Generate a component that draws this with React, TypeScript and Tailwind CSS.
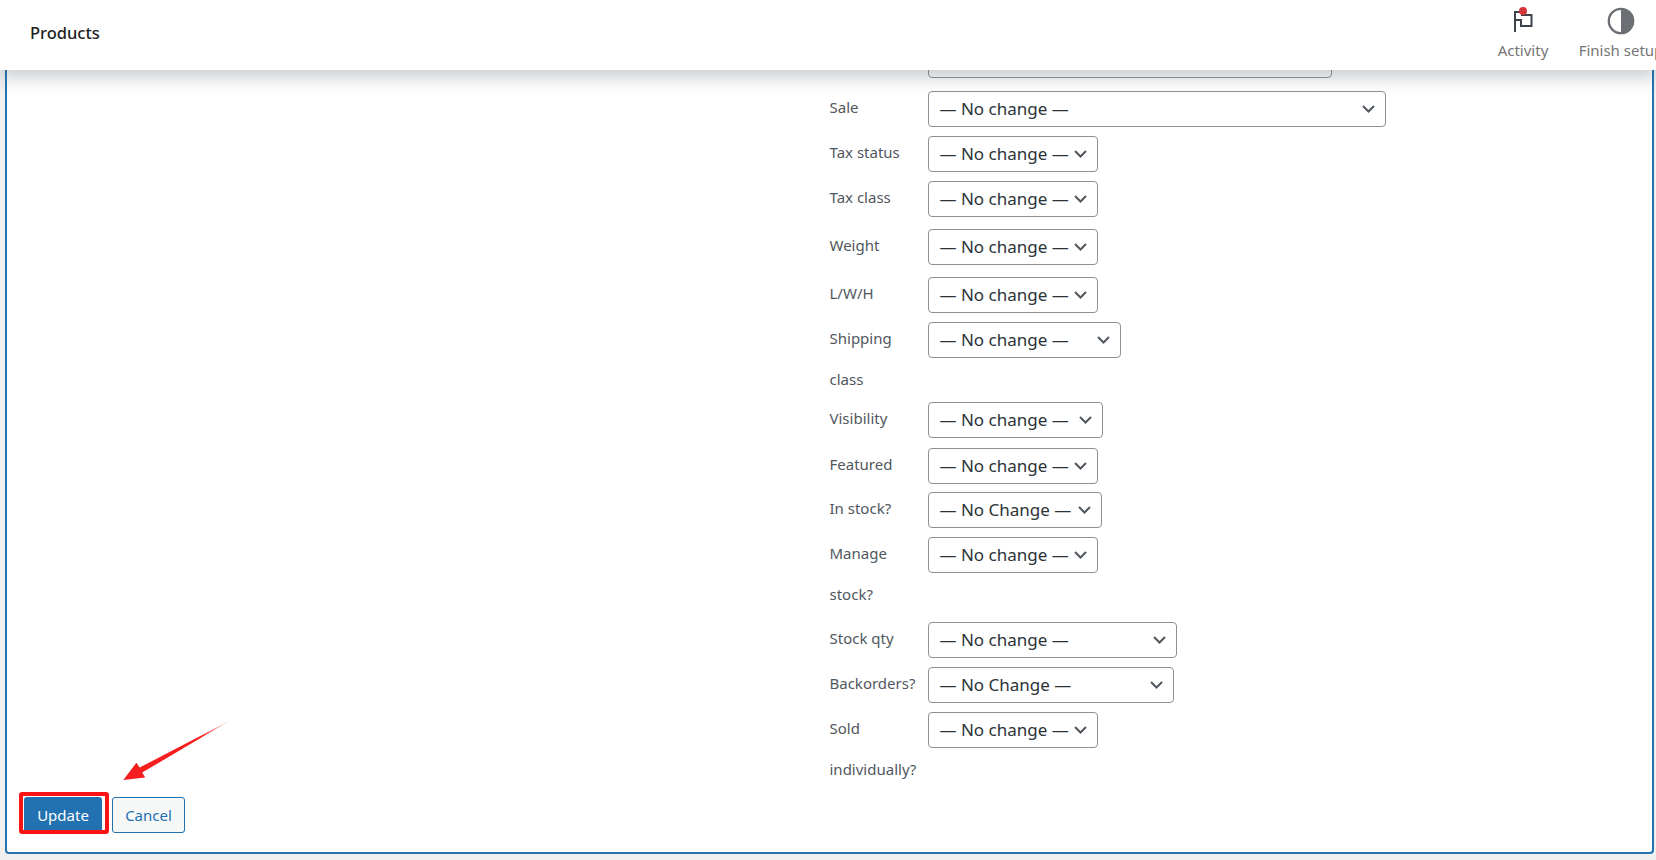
type Row = { label: string[]; w: number; h: number; text?: string }

const rows: Row[] = [
  { label: ["Price"], w: 404, h: 49 },
  { label: ["Sale"], w: 458, h: 45 },
  { label: ["Tax status"], w: 170, h: 45 },
  { label: ["Tax class"], w: 170, h: 48 },
  { label: ["Weight"], w: 170, h: 48 },
  { label: ["L/W/H"], w: 170, h: 45 },
  { label: ["Shipping", "class"], w: 193, h: 80 },
  { label: ["Visibility"], w: 175, h: 46 },
  { label: ["Featured"], w: 170, h: 44 },
  { label: ["In stock?"], w: 174, h: 45, text: "— No Change —" },
  { label: ["Manage", "stock?"], w: 170, h: 85 },
  { label: ["Stock qty"], w: 249, h: 45 },
  { label: ["Backorders?"], w: 246, h: 45, text: "— No Change —" },
  { label: ["Sold", "individually?"], w: 170, h: 85 },
]

const Chevron = () => (
  <svg width="13" height="8" viewBox="0 0 13 8" className="absolute right-[10px] top-1/2 -translate-y-1/2">
    <polyline points="1,1 6.5,6.5 12,1" fill="none" stroke="#50575e" strokeWidth="2" />
  </svg>
)

const Select = ({ w, text }: { w: number; text: string }) => (
  <div
    className="relative flex h-[36px] items-center rounded-[4px] border border-[#8c8f94] bg-white pl-[11px] text-[17px] text-[#2c3338]"
    style={{ width: w }}
  >
    <span className="whitespace-nowrap">{text}</span>
    <Chevron />
  </div>
)

const FlagIcon = () => (
  <svg width="24" height="24" viewBox="0 0 24 24" className="overflow-visible">
    <path d="M4 23V3H11V6H20.5V17H10V11H4" fill="none" stroke="#3c434a" strokeWidth="2" />
    <circle cx="12" cy="2" r="4" fill="#d63638" />
  </svg>
)

const SetupIcon = () => (
  <svg width="28" height="28" viewBox="0 0 28 28">
    <circle cx="14" cy="14" r="12.2" fill="#fff" stroke="#6b6e72" strokeWidth="2.3" />
    <path d="M14 2.5A11.5 11.5 0 0 1 14 25.5Z" fill="#6b6e72" />
  </svg>
)

export default function App() {
  return (
    <div className="relative h-[860px] w-[1656px] overflow-hidden bg-[#f0f0f1] font-['Noto_Sans',sans-serif]">
      {/* top bar, sits over the scrolled form */}
      <header className="absolute inset-x-0 top-0 z-10 flex h-[70px] bg-white shadow-[0_8px_16px_0_rgba(85,93,102,0.3)]">
        <h1 className="mt-[21px] pl-[30px] text-[16.5px] font-medium leading-[24px] text-[#1e1e1e]">Products</h1>
        <div className="ml-auto mr-[-14px] flex">
          <div className="flex w-[98px] flex-col items-center pt-[7px]">
            <div className="flex h-[28px] items-center justify-center">
              <FlagIcon />
            </div>
            <span className="mt-[5px] text-[15px] leading-[20px] text-[#757575]">Activity</span>
          </div>
          <div className="flex w-[98px] flex-col items-center pt-[7px]">
            <div className="flex h-[28px] items-center justify-center">
              <SetupIcon />
            </div>
            <span className="mt-[5px] whitespace-nowrap text-[15px] leading-[20px] text-[#757575]">Finish setup</span>
          </div>
        </div>
      </header>

      <div className="ml-[5px] mr-[2px] flex flex-col rounded-b-[4px] border-x-2 border-b-2 border-[#2271b1] bg-white pb-[19px]">
        <div className="grid grid-cols-2 pt-[42px]">
          <div />
          <div className="flex flex-col">
            {rows.map((r) => (
              <div key={r.label.join(" ")} className="flex items-start" style={{ height: r.h }}>
                <div className="-mt-1 w-[98px] shrink-0 text-[15px] leading-[41px] text-[#50575e]">
                  {r.label.map((l) => (
                    <div key={l}>{l}</div>
                  ))}
                </div>
                <Select w={r.w} text={r.text ?? "— No change —"} />
              </div>
            ))}
          </div>
        </div>

        <div className="flex gap-[10px] pl-[17px]">
          <div className="relative">
            <button className="h-[36px] w-[78px] rounded-[3px] bg-[#2271b1] text-[15px] text-white">Update</button>
            <div className="absolute left-[-5px] top-[-5px] h-[42px] w-[90px] rounded-[3px] border-[4px] border-[#fb1414]" />
          </div>
          <button className="h-[36px] w-[73px] rounded-[3px] border border-[#2271b1] bg-[#f6f7f7] text-[15px] text-[#2271b1]">
            Cancel
          </button>
        </div>
      </div>

      {/* annotation arrow */}
      <svg className="absolute left-[110px] top-[710px]" width="130" height="80" viewBox="110 710 130 80">
        <defs>
          <linearGradient id="arr" x1="231" y1="720" x2="140" y2="770" gradientUnits="userSpaceOnUse">
            <stop offset="0" stopColor="#ff2a2a" stopOpacity="0.2" />
            <stop offset="0.35" stopColor="#f51d1d" />
            <stop offset="1" stopColor="#f51d1d" />
          </linearGradient>
        </defs>
        <polygon
          points="231,720 139.6,767.6 136.4,762.8 123.3,780 145.2,777.6 142.2,772.6"
          fill="url(#arr)"
        />
      </svg>
    </div>
  )
}
